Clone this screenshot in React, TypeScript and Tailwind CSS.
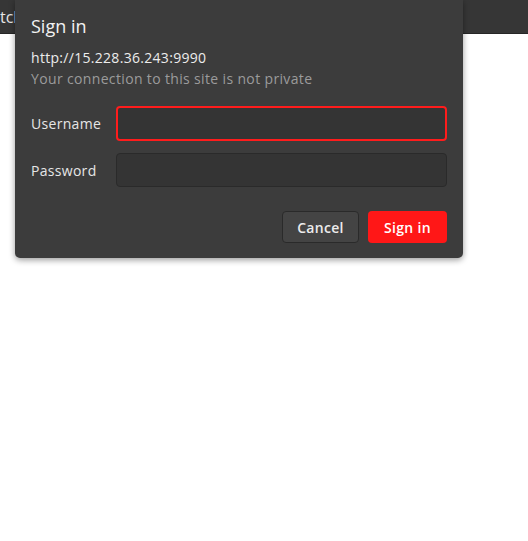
export default function App() {
  return (
    <div className="relative min-h-[541px] w-full bg-white font-['Open_Sans','Noto_Sans',sans-serif]">
      {/* browser tab strip behind the dialog */}
      <div className="flex h-[34px] items-center overflow-hidden border-b border-[#262626] bg-[#363636]">
        <span className="text-[16px] leading-none text-[#e6e6e6]">tch</span>
      </div>

      {/* auth dialog */}
      <div className="absolute left-[15px] top-0 w-[448px] rounded-b-[5px] bg-[#3c3c3c] px-4 pb-[15px] pt-[14px] tracking-[0.3px] shadow-[0_2px_6px_rgba(0,0,0,0.4)]">
        <h1 className="text-[18px] leading-[24px] tracking-normal text-[#f2f2f2]">Sign in</h1>
        <p className="mt-[10px] text-[14px] leading-[20px] text-[#ececec]">http://15.228.36.243:9990</p>
        <p className="text-[14px] leading-[21px] tracking-[0.35px] text-[#9b9b9b]">Your connection to this site is not private</p>

        <div className="mt-[17px] flex flex-col gap-3">
          <div className="flex items-center">
            <label className="w-[85px] text-[14px] text-[#e6e6e6]">Username</label>
            <input className="h-[35px] flex-1 rounded-[4px] border-2 border-[#ff1c1c] bg-[#343434] px-2 text-[14px] text-white outline-none" />
          </div>
          <div className="flex items-center">
            <label className="w-[85px] text-[14px] text-[#e6e6e6]">Password</label>
            <input type="password" className="h-[34px] flex-1 rounded-[4px] border border-[#2a2a2a] bg-[#343434] px-2 text-[14px] text-white outline-none" />
          </div>
        </div>

        <div className="mt-6 flex justify-end gap-[9px]">
          <button className="h-[32px] w-[77px] rounded-[4px] border border-[#2a2a2a] bg-[#444444] text-[14px] font-semibold text-[#ececec]">Cancel</button>
          <button className="h-[32px] w-[79px] rounded-[4px] bg-[#ff1717] text-[14px] font-semibold text-white">Sign in</button>
        </div>
      </div>
    </div>
  );
}
